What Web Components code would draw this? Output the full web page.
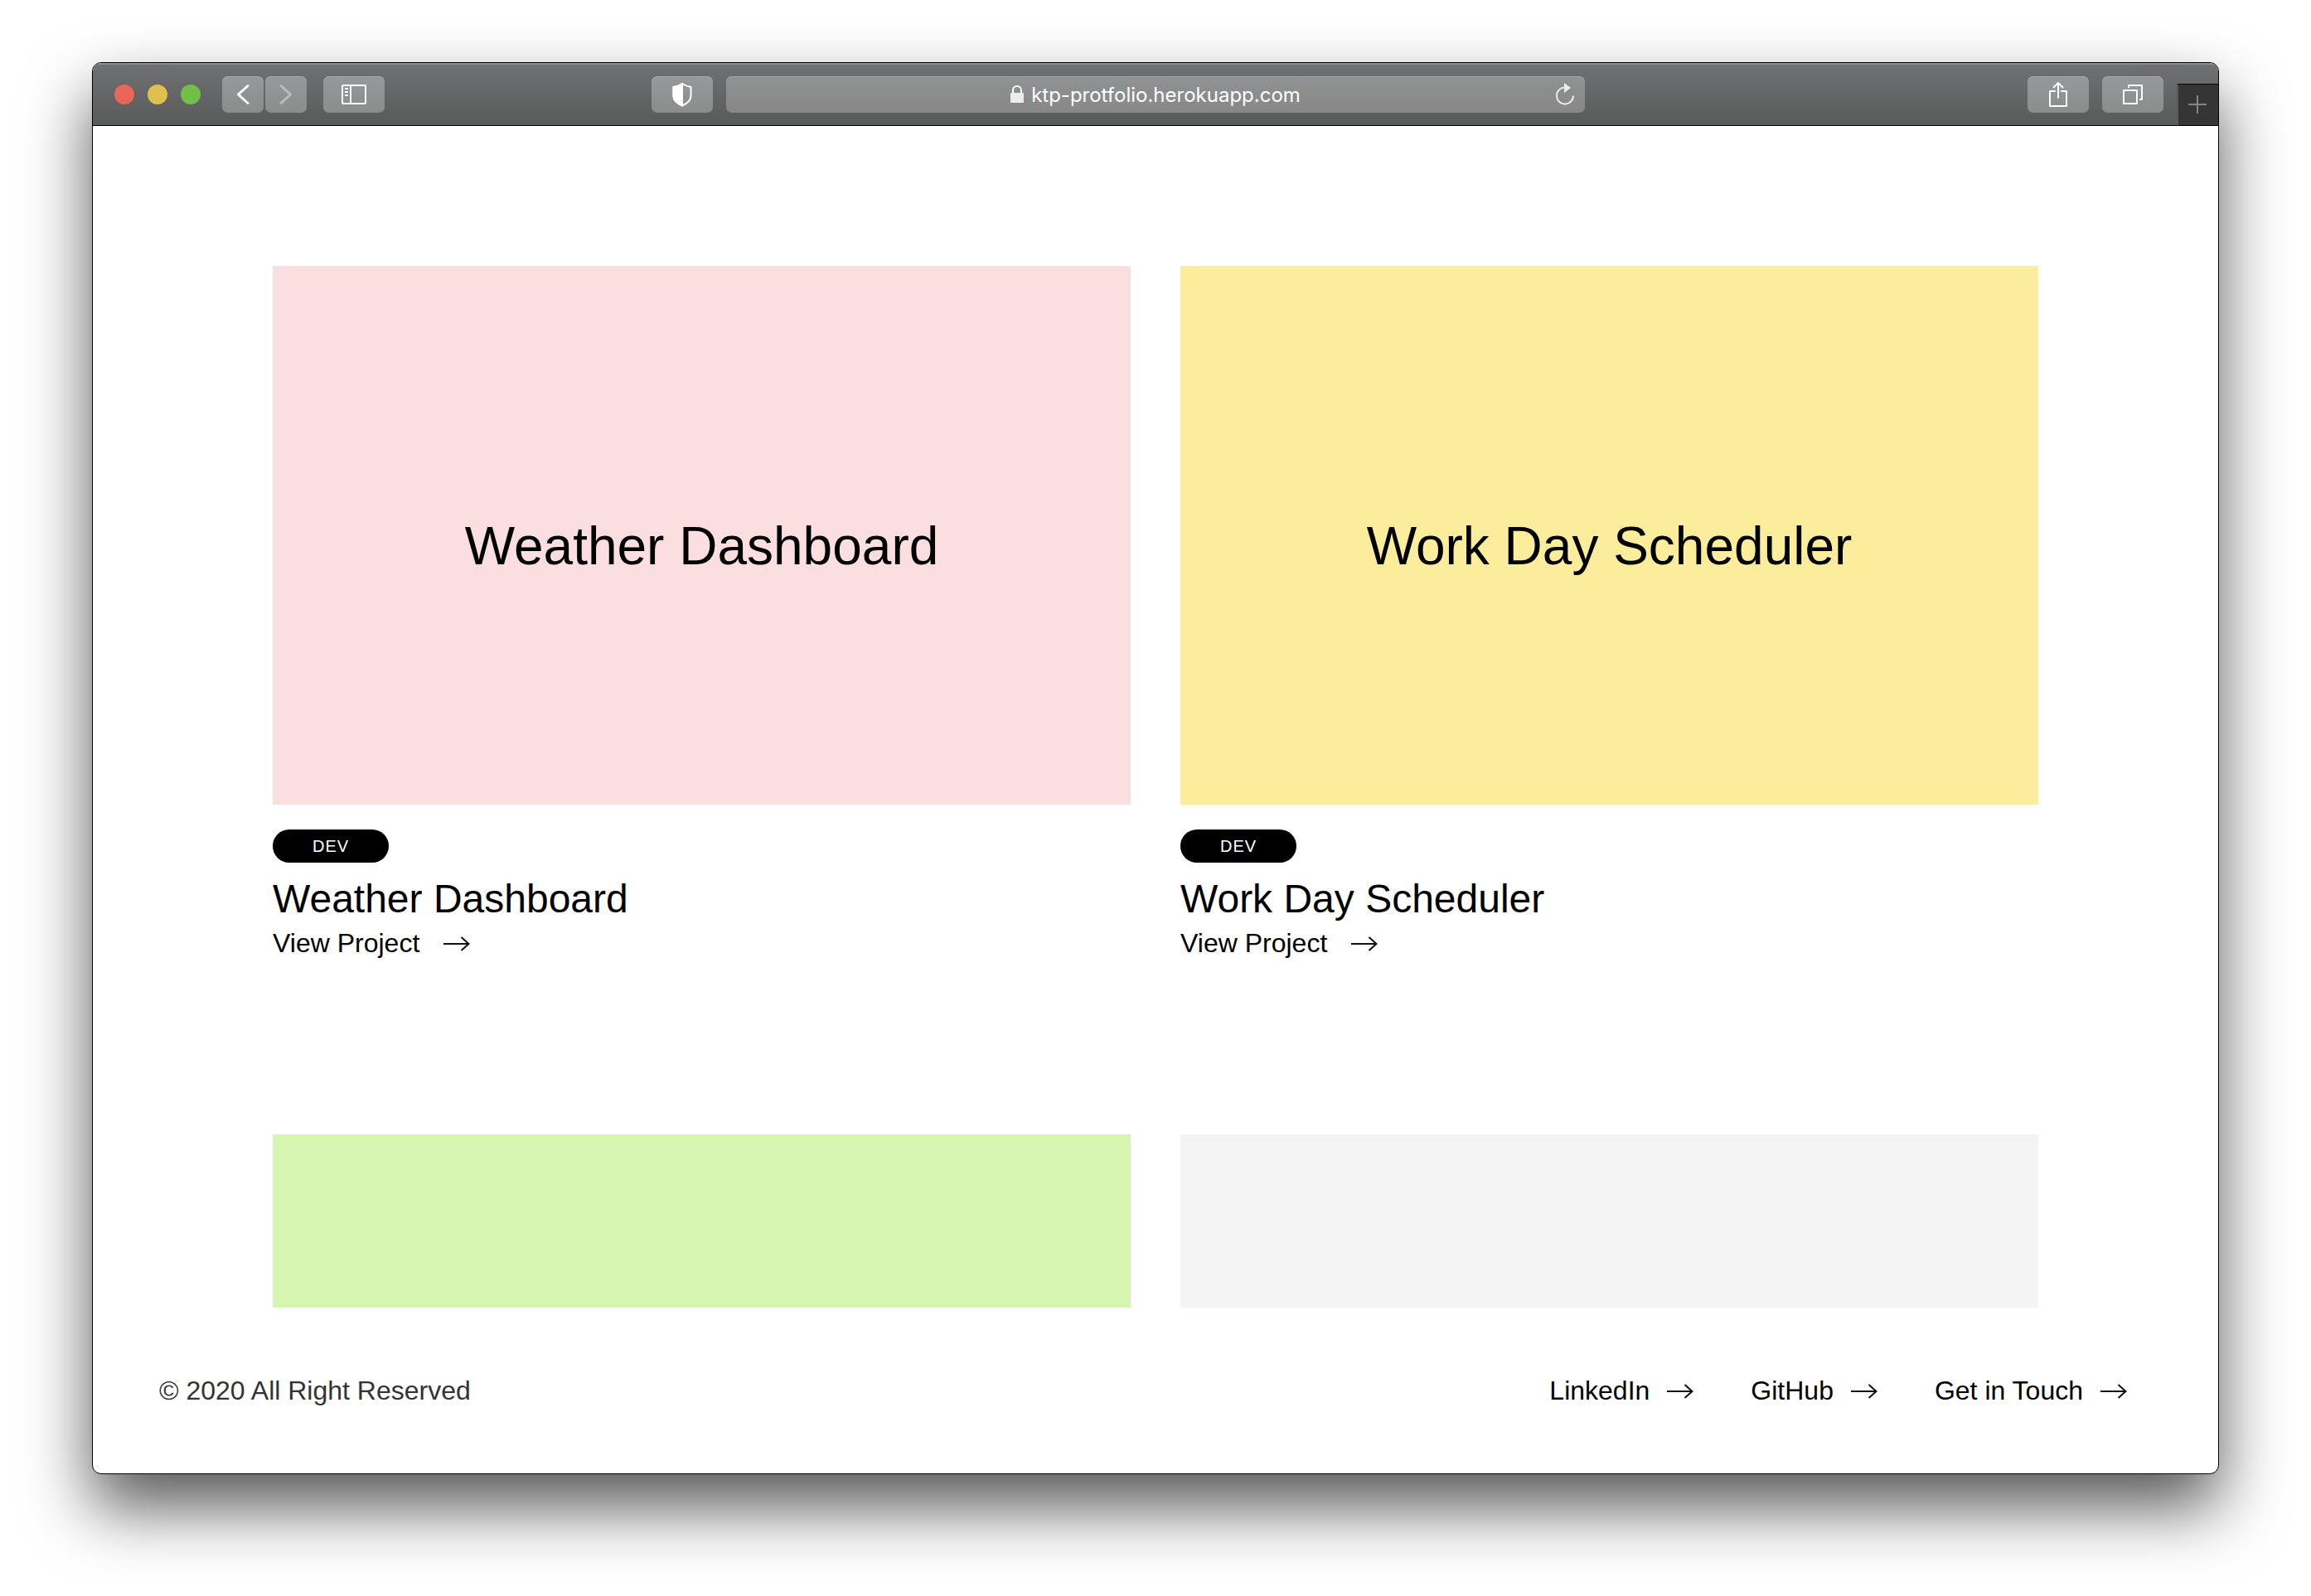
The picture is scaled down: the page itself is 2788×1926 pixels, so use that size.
<!DOCTYPE html>
<html lang="en">
<head>
<meta charset="utf-8">
<title>Portfolio</title>
<style>
  body { margin: 0; background: #fff; font-family: "Liberation Sans", Arial, Helvetica, sans-serif; color: #000; }
</style>
</head>
<body>
<browser-window>
  <browser-toolbar slot="toolbar" url="ktp-protfolio.herokuapp.com"></browser-toolbar>
  <project-grid>
    <project-card name="Weather Dashboard" tag="DEV" tone="#fadee0"></project-card>
    <project-card name="Work Day Scheduler" tag="DEV" tone="#fced9d"></project-card>
    <project-card tone="#d5f5b1"></project-card>
    <project-card tone="#f4f4f4"></project-card>
  </project-grid>
  <site-footer>
    © 2020 All Right Reserved
    <arrow-link slot="links">LinkedIn</arrow-link>
    <arrow-link slot="links">GitHub</arrow-link>
    <arrow-link slot="links">Get in Touch</arrow-link>
  </site-footer>
</browser-window>

<script>
  const define = (name, render) => customElements.define(name, class extends HTMLElement {
    connectedCallback() {
      if (this.shadowRoot) return;
      this.attachShadow({ mode: "open" }).innerHTML = render(this);
    }
  });

  define("browser-window", () => `
    <style>
      :host { display: flex; box-sizing: border-box; height: 100vh; padding: 75px 111px 147px; overflow: hidden; }
      .frame {
        flex: 1; min-width: 0; display: flex; flex-direction: column; overflow: hidden;
        border: 1px solid #000; border-radius: 11px; background: #fff;
        box-shadow: 0 40px 80px rgba(0, 0, 0, .66);
      }
      .page { flex: 1; min-height: 0; display: flex; flex-direction: column; }
    </style>
    <div class="frame">
      <slot name="toolbar"></slot>
      <div class="page"><slot></slot></div>
    </div>`);

  define("tool-button", el => `
    <style>
      :host { display: block; }
      button {
        display: flex; align-items: center; justify-content: center;
        width: 74px; height: 44px; padding: 0; border: 0; border-radius: 7px; color: #fff;
        background: linear-gradient(#97989a, #8b8c8c);
        box-shadow: inset 0 1px #a9aaab;
      }
      :host([narrow]) button { width: 50px; }
      :host([dim]) button { color: #bcbdbd; }
    </style>
    <button type="button" aria-label="${el.getAttribute("label")}"><slot></slot></button>`);

  define("browser-toolbar", el => `
    <style>
      :host {
        display: grid; grid-template-columns: 764fr 1036fr 764fr; align-items: center; height: 75px;
        background: linear-gradient(#707173, #595a5a); border-bottom: 1px solid #000;
        box-shadow: inset 0 2px #8c8e8d;
      }
      svg { display: block; fill: none; stroke: currentColor; }
      .left, .right, .lights, .nav { display: flex; align-items: center; }
      .left { padding: 0 16px 0 26px; }
      .lights { gap: 16px; }
      .lights i { width: 24px; height: 24px; border-radius: 50%; background: #ec6559; }
      .lights i:nth-child(2) { background: #e0c04c; }
      .lights i:nth-child(3) { background: #71bf46; }
      .nav { gap: 2px; margin: 0 20px 0 26px; }
      .shield { margin-left: auto; }
      .address {
        display: flex; align-items: center; height: 44px; border-radius: 7px; color: #fff;
        background: linear-gradient(#919293, #868786);
        box-shadow: inset 0 1px #a3a4a4;
      }
      .where { flex: 1; display: flex; align-items: center; justify-content: center; gap: 9px; padding-left: 36px; }
      input {
        field-sizing: content; padding: 2px 0 0; border: 0; outline: 0; background: none; color: #fff;
        font: 400 24px/30px Inter, "Liberation Sans", sans-serif;
      }
      .reload { display: block; padding: 0 12px 0 0; border: 0; background: none; color: #ececec; }
      .right { justify-content: flex-end; align-self: stretch; gap: 16px; }
      .new-tab {
        align-self: flex-end; display: flex; align-items: center; justify-content: center; box-sizing: border-box;
        width: 50px; height: 50px; padding: 0 2px 2px 0; color: #858585; background: #353535;
        border: 0; border-top: 1px solid #000; border-left: 2px solid #595a5a;
      }
    </style>
    <div class="left">
      <div class="lights"><i></i><i></i><i></i></div>
      <div class="nav">
        <tool-button narrow label="Back">
          <svg width="16" height="26" viewBox="0 0 16 26" stroke-width="3" stroke-linecap="round" stroke-linejoin="round"><path d="M14 2.500 2.500 13 14 23.500"/></svg>
        </tool-button>
        <tool-button narrow dim label="Forward">
          <svg width="16" height="26" viewBox="0 0 16 26" stroke-width="3" stroke-linecap="round" stroke-linejoin="round"><path d="M2 2.500 13.500 13 2 23.500"/></svg>
        </tool-button>
      </div>
      <tool-button label="Sidebar">
        <svg width="30" height="24" viewBox="0 0 30 24" stroke-width="2"><rect x="1" y="1" width="28" height="22" rx="1"/><path d="M11 1v22M4 5h4M4 9h4M4 13h4"/></svg>
      </tool-button>
      <tool-button class="shield" label="Privacy">
        <svg width="24" height="30" viewBox="0 0 24 30" stroke-width="2" stroke-linejoin="round"><path d="M12 2C9 4 5 5.500 1.500 6v11c0 5 5 9 10.500 11.500C17.500 26 22.500 22 22.500 17V6C19 5.500 15 4 12 2Z"/><path d="M12 2C9 4 5 5.500 1.500 6v11c0 5 5 9 10.500 11.500Z" fill="currentColor"/></svg>
      </tool-button>
    </div>
    <div class="address">
      <div class="where">
        <label for="url" aria-label="Address"><svg width="16" height="22" viewBox="0 0 16 22" stroke="#ececec"><path d="M3 10V6a5 5 0 0 1 10 0v4" stroke-width="2"/><rect y="9" width="16" height="12" rx="1" fill="#ececec" stroke="none"/></svg></label>
        <input id="url" type="text" value="${el.getAttribute("url")}" spellcheck="false">
      </div>
      <button class="reload" type="button" aria-label="Reload">
        <svg width="24" height="28" viewBox="0 0 24 28" stroke-width="2"><path d="M12.500 5.500A10 10 0 1 0 22 15.500"/><path d="M11 0 19 6 11 12Z" fill="currentColor" stroke="none"/></svg>
      </button>
    </div>
    <div class="right">
      <tool-button label="Share">
        <svg width="22" height="32" viewBox="0 0 22 32" stroke-width="2" stroke-linecap="round" stroke-linejoin="round"><path d="M7 12H1v18h20V12h-6M11 20V2M5.500 7.500 11 2l5.500 5.500"/></svg>
      </tool-button>
      <tool-button label="Show tabs">
        <svg width="24" height="24" viewBox="0 0 24 24" stroke-width="2" stroke-linejoin="round"><rect x="1" y="7" width="16" height="16"/><path d="M7 4V1h16v17h-3"/></svg>
      </tool-button>
      <button class="new-tab" type="button" aria-label="New tab">
        <svg width="22" height="22" viewBox="0 0 22 22" stroke-width="2"><path d="M11 0v22M0 11h22"/></svg>
      </button>
    </div>`);

  define("project-grid", () => `
    <style>
      :host { flex: 1; min-height: 0; overflow: hidden; box-sizing: border-box; padding: 169px 217px 0; }
      .grid { display: grid; grid-template-columns: 1fr 1fr; gap: 211px 60px; }
    </style>
    <div class="grid"><slot></slot></div>`);

  define("arrow-link", () => `
    <style>
      :host { display: block; }
      a { display: flex; align-items: center; gap: var(--arrow-gap, 21px); color: #000; text-decoration: none; font-size: 32px; line-height: 40px; }
      svg { display: block; fill: none; stroke: #111; stroke-width: 2; }
    </style>
    <a href="#"><slot></slot><svg width="32" height="20" viewBox="0 0 32 20"><path d="M0 11h31M21.500 3 30.500 11l-9 8"/></svg></a>`);

  define("project-card", el => {
    const name = el.getAttribute("name");
    return `
    <style>
      :host { display: block; }
      .cover {
        display: flex; align-items: center; justify-content: center; box-sizing: border-box;
        height: 650px; padding-top: 26px; background: ${el.getAttribute("tone")}; font-size: 64px; line-height: 72px;
      }
      .tag {
        display: flex; width: fit-content; margin-top: 30px; padding: 0 48px; border-radius: 20px;
        background: #000; color: #fff; font-size: 20px; line-height: 40px; letter-spacing: 1px;
      }
      h2 { margin: 16px 0 0; font-size: 48px; line-height: 56px; font-weight: 400; }
      arrow-link { --arrow-gap: 29px; margin-top: 5px; }
    </style>
    <div class="cover">${name || ""}</div>
    ${name ? `<span class="tag">${el.getAttribute("tag")}</span><h2>${name}</h2><arrow-link>View Project</arrow-link>` : ""}`;
  });

  define("site-footer", () => `
    <style>
      :host {
        display: flex; align-items: center; justify-content: space-between; box-sizing: border-box;
        height: 200px; padding: 0 110px 0 80px; color: #333; font-size: 32px; line-height: 40px;
      }
      nav { display: flex; gap: 69px; }
    </style>
    <span><slot></slot></span>
    <nav><slot name="links"></slot></nav>`);
</script>
</body>
</html>
